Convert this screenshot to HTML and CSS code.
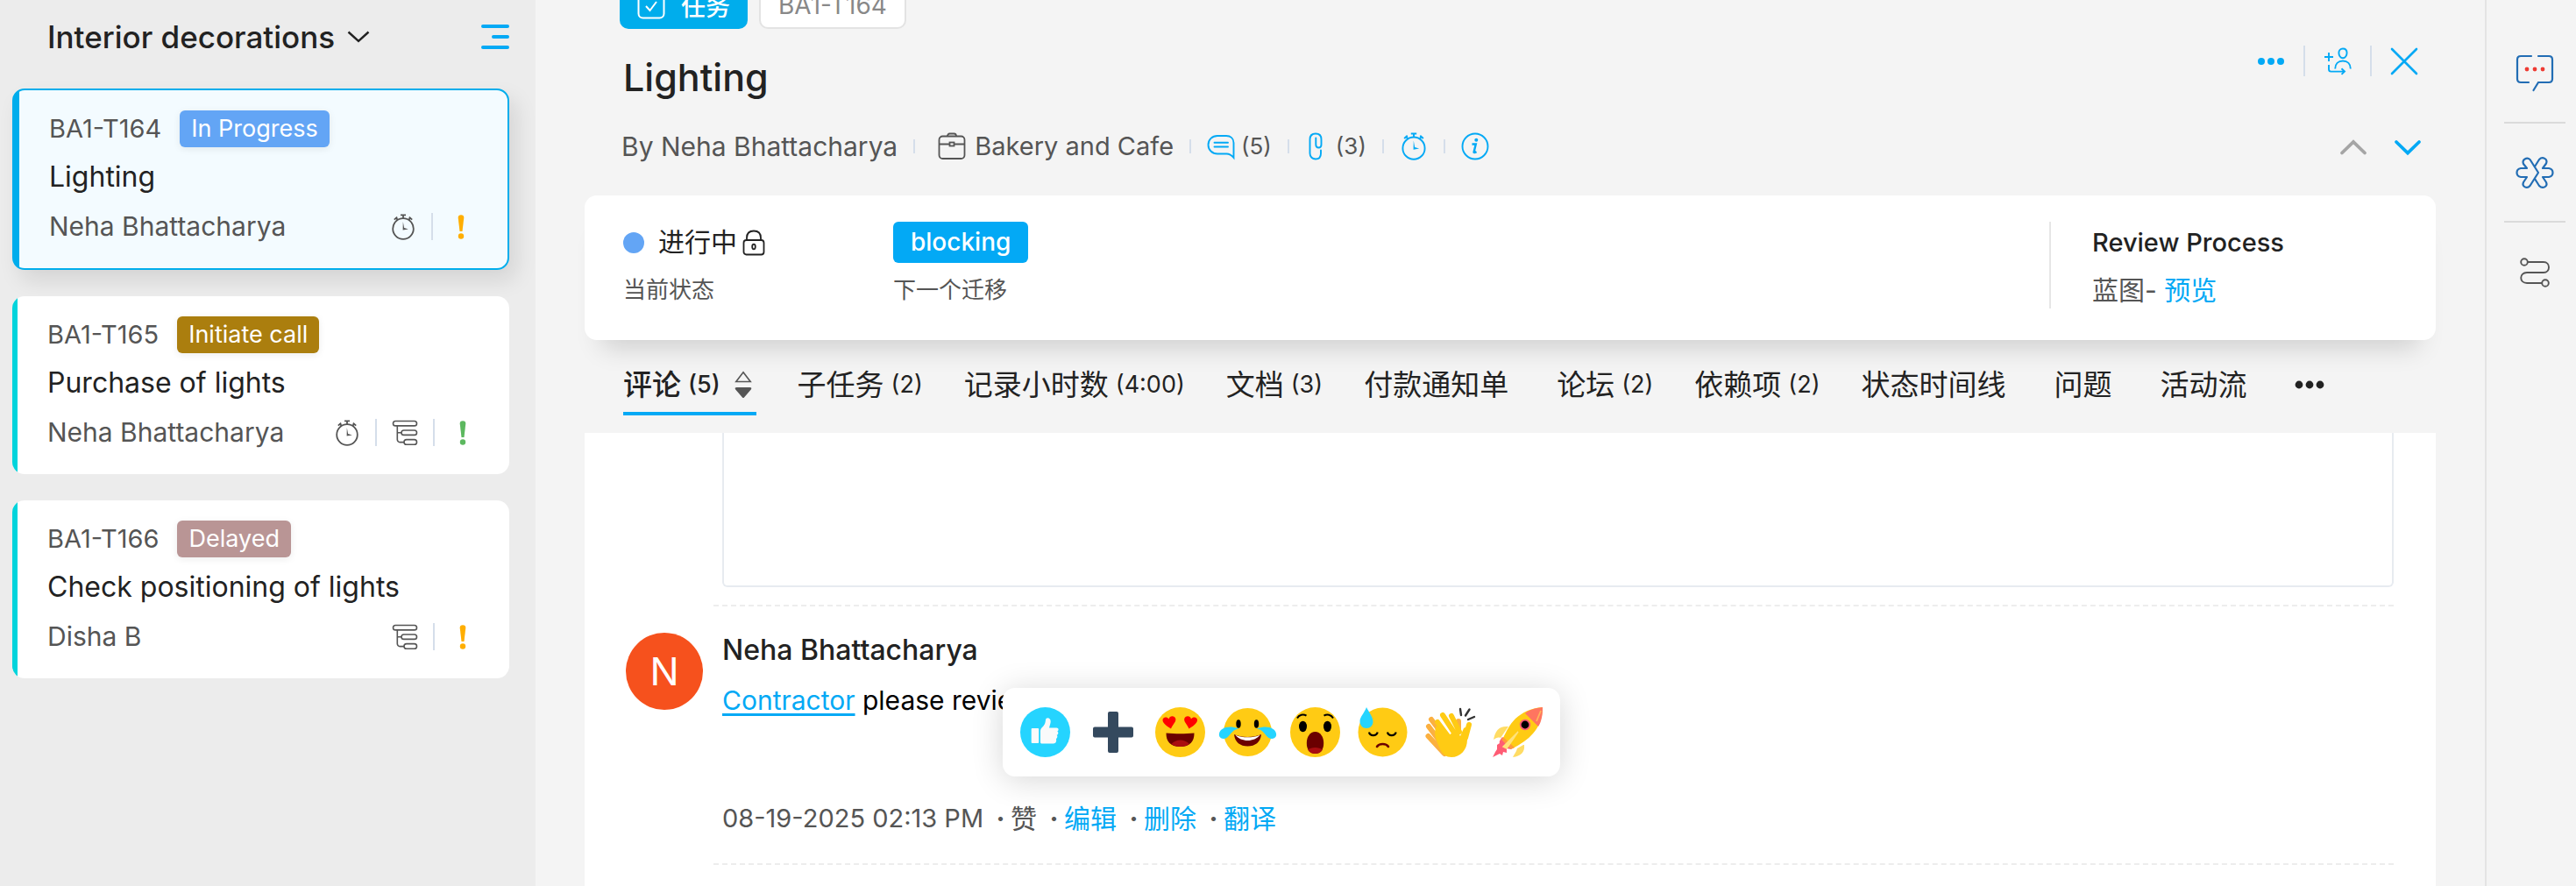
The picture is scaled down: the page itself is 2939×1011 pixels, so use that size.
FILE: index.html
```html
<!DOCTYPE html>
<html lang="zh-CN">
    <head>
        <meta charset="utf-8">
        <meta name="viewport" content="width=device-width, initial-scale=1">
        <title>Lighting</title>
        <link rel="stylesheet" href="styles.css">
    </head>
    <body>
        <!-- Shared icons -->
        <svg class="sprite" aria-hidden="true">
            <symbol id="timer" viewBox="0 0 30 30">
                <g fill="none" stroke="currentColor" stroke-width="1.8">
                    <circle cx="15" cy="17" r="11.8" />
                    <path d="M12 1.4h6M15 1.4v3.6M6.6 4.6l2.4 2.4M23.4 4.6L21 7" />
                    <path d="M4.8 6.6l3.4-3M25.2 6.6l-3.4-3" />
                </g>
                <path d="M14.8 9l1.3 7 4.7 1.4-6.2 1z" fill="currentColor" />
            </symbol>
            <symbol id="subtask" viewBox="0 0 30 30">
                <g fill="none" stroke="currentColor" stroke-width="1.6">
                    <rect x="1.5" y="1.5" width="27" height="5.4" rx="2.7" />
                    <rect x="11" y="12" width="17.5" height="5.4" rx="2.7" />
                    <rect x="14" y="22.6" width="14.5" height="5.6" rx="2.8" />
                    <path d="M6.3 7v15.600a3 3 0 0 0 3 3H14M6.300 14.700H11" />
                </g>
            </symbol>
            <symbol id="priority" viewBox="0 0 10 30">
                <path d="M5 1.200c2.200 0 3.500 1.200 3.300 3.300L6.500 20h-3L1.700 4.500C1.500 2.400 2.800 1.200 5 1.200z" fill="currentColor" />
                <circle cx="5" cy="25.500" r="3.200" fill="currentColor" />
            </symbol>
        </svg>

        <div class="app">
            <aside class="sidebar">
                <div class="sidebar-head">
                    <button class="list-title">
                        Interior decorations
                        <svg width="26" height="14" viewBox="0 0 26 14"><path d="M1.500 1.500L13 12 24.500 1.500" fill="none" stroke="currentColor" stroke-width="2.400" /></svg>
                    </button>
                    <button class="list-menu" aria-label="Collapse list">
                        <svg width="32" height="28" viewBox="0 0 32 28"><path d="M2 2h28M14 14h16M2 26h28" stroke="currentColor" stroke-width="4" stroke-linecap="round" /></svg>
                    </button>
                </div>

                <div class="card active">
                    <div class="card-row"><span>BA1-T164</span><span class="badge progress">In Progress</span></div>
                    <div class="card-name">Lighting</div>
                    <div class="card-row">
                        <span class="owner">Neha Bhattacharya</span>
                        <div class="card-icons">
                            <svg width="30" height="30"><use href="#timer" /></svg>
                            <i class="sep"></i>
                            <svg class="prio medium" width="10" height="30"><use href="#priority" /></svg>
                        </div>
                    </div>
                </div>

                <div class="card">
                    <div class="card-row"><span>BA1-T165</span><span class="badge initiate">Initiate call</span></div>
                    <div class="card-name">Purchase of lights</div>
                    <div class="card-row">
                        <span class="owner">Neha Bhattacharya</span>
                        <div class="card-icons">
                            <svg width="30" height="30"><use href="#timer" /></svg>
                            <i class="sep"></i>
                            <svg width="30" height="30"><use href="#subtask" /></svg>
                            <i class="sep"></i>
                            <svg class="prio low" width="10" height="30"><use href="#priority" /></svg>
                        </div>
                    </div>
                </div>

                <div class="card">
                    <div class="card-row"><span>BA1-T166</span><span class="badge delayed">Delayed</span></div>
                    <div class="card-name">Check positioning of lights</div>
                    <div class="card-row">
                        <span class="owner">Disha B</span>
                        <div class="card-icons">
                            <svg width="30" height="30"><use href="#subtask" /></svg>
                            <i class="sep"></i>
                            <svg class="prio medium" width="10" height="30"><use href="#priority" /></svg>
                        </div>
                    </div>
                </div>
            </aside>

            <main class="main">
                <header class="task-head">
                    <div class="task-info">
                        <div class="tags">
                            <span class="tag tag-type">
                                <svg width="32" height="32" viewBox="0 0 32 32"><g fill="none" stroke="currentColor" stroke-width="2"><rect x="1.500" y="1.500" width="29" height="29" rx="5" /><path d="M10 17l4.500 5L22 12" /></g></svg>
                                任务
                            </span>
                            <span class="tag tag-id">BA1-T164</span>
                        </div>
                        <h1>Lighting</h1>
                        <div class="meta">
                            <span>By Neha Bhattacharya</span>
                            <i class="sep short"></i>
                            <span class="project">
                                <svg width="32" height="32" viewBox="0 0 32 32"><g fill="none" stroke="currentColor" stroke-width="1.800"><rect x="1.500" y="4.500" width="29" height="25.500" rx="4" /><path d="M11 4.500c0-2 1-3 2.500-3h5c1.500 0 2.500 1 2.500 3M1.500 13.500H13M19 13.500h11.500" /><rect x="13.500" y="11.500" width="5" height="4" /></g></svg>
                                Bakery and Cafe
                            </span>
                            <i class="sep short"></i>
                            <button class="count-btn">
                                <svg width="32" height="32" viewBox="0 0 32 32"><g fill="none" stroke="currentColor" stroke-width="1.900"><path d="M12 4h10c5 0 8.500 3 8.500 8v17c-2.500-3-4.500-4.500-8-4.500H12C6 24.500 1.500 20 1.500 14.200S6 4 12 4z" /><path d="M8.500 11.800H24M8.500 16.500H24" stroke-linecap="round" /></g></svg>
                                (5)
                            </button>
                            <i class="sep short"></i>
                            <button class="count-btn clip">
                                <svg width="16" height="32" viewBox="0 0 16 32"><path d="M14 20.500V24c0 4-2.300 6.500-6 6.500S1.500 28 1.500 24V8C1.500 4 4 1.500 8 1.500S14.500 4 14.500 8v6c0 2.500-1 3.500-3 3.500s-3.200-1-3.200-3.500V6.500" fill="none" stroke="currentColor" stroke-width="1.900" stroke-linecap="round" /></svg>
                                (3)
                            </button>
                            <i class="sep short"></i>
                            <button class="icon-btn" aria-label="Timer"><svg width="32" height="32"><use href="#timer" /></svg></button>
                            <i class="sep short"></i>
                            <button class="icon-btn" aria-label="Info">
                                <svg width="32" height="32" viewBox="0 0 32 32"><circle cx="16" cy="16" r="14.500" fill="none" stroke="currentColor" stroke-width="1.900" /><circle cx="17.300" cy="8.800" r="2" fill="currentColor" /><path d="M12.500 13.500h4.300l-2.200 9c-.2 1 .8.800 2.900-.4" fill="none" stroke="currentColor" stroke-width="2.400" /></svg>
                            </button>
                        </div>
                    </div>
                    <div class="task-tools">
                        <div class="actions">
                            <button class="icon-btn" aria-label="More"><svg width="32" height="32" viewBox="0 0 32 32"><g fill="currentColor"><circle cx="5" cy="16" r="4" /><circle cx="16" cy="16" r="4" /><circle cx="27" cy="16" r="4" /></g></svg></button>
                            <i class="sep tall"></i>
                            <button class="icon-btn" aria-label="Assign">
                                <svg width="32" height="32" viewBox="0 0 32 32"><g fill="none" stroke="currentColor" stroke-width="1.900"><path d="M1 11h10M6 6v10M6 20v5c0 1.800.8 2.600 2.500 2.600H24M20.500 24.300l3.500 3.300-3.500 3.300" /><path d="M22 1.500c2.800 0 4.600 2 4.600 4.800 0 3.200-2 6-4.600 6s-4.600-2.800-4.600-6c0-2.800 1.800-4.800 4.600-4.800zM13.200 24.500c0-5.500 3.500-9 8.800-9s8.800 3.500 8.800 9" /></g></svg>
                            </button>
                            <i class="sep tall"></i>
                            <button class="icon-btn" aria-label="Close"><svg width="32" height="32" viewBox="0 0 32 32"><path d="M2 2l28 28M30 2L2 30" stroke="currentColor" stroke-width="2.600" stroke-linecap="round" /></svg></button>
                        </div>
                        <div class="pager">
                            <button class="icon-btn prev" aria-label="Previous"><svg width="32" height="18" viewBox="0 0 32 18"><path d="M3 15.500L16 3l13 12.500" fill="none" stroke="currentColor" stroke-width="3.800" stroke-linecap="round" /></svg></button>
                            <button class="icon-btn" aria-label="Next"><svg width="32" height="18" viewBox="0 0 32 18"><path d="M3 3l13 12.500L29 3" fill="none" stroke="currentColor" stroke-width="3.800" stroke-linecap="round" /></svg></button>
                        </div>
                    </div>
                </header>

                <section class="status">
                    <div class="status-item">
                        <div class="status-value">
                            <i class="dot"></i>进行中
                            <svg width="26" height="30" viewBox="0 0 26 30"><g fill="none" stroke="currentColor" stroke-width="1.800"><rect x="1.500" y="12" width="23" height="16.500" rx="3" /><path d="M5 12V9.500C5 4.500 8 1.500 13 1.500s8 3 8 8V12" /><ellipse cx="13" cy="19.500" rx="1.800" ry="2.800" /></g></svg>
                        </div>
                        <div class="status-label">当前状态</div>
                    </div>
                    <div class="status-item">
                        <div><button class="transition">blocking</button></div>
                        <div class="status-label">下一个迁移</div>
                    </div>
                    <div class="process">
                        <div class="process-name">Review Process</div>
                        <div class="process-link">蓝图- <a href="#">预览</a></div>
                    </div>
                </section>

                <nav class="tabs">
                    <button class="tab selected"><span>评论</span><b>(5)</b>
                        <svg width="20" height="32" viewBox="0 0 20 32"><path d="M10 1.800L18.200 12.500H1.800z" fill="none" stroke="#555" stroke-width="1.600" /><path d="M2.500 19h15c2 0 2.300 1.200 1.300 2.500L11 30.500c-.6.700-1.400.700-2 0L1.200 21.500C.2 20.200.5 19 2.500 19z" fill="#555" /></svg>
                    </button>
                    <button class="tab"><span>子任务</span><b>(2)</b></button>
                    <button class="tab"><span>记录小时数</span><b>(4:00)</b></button>
                    <button class="tab"><span>文档</span><b>(3)</b></button>
                    <button class="tab"><span>付款通知单</span></button>
                    <button class="tab"><span>论坛</span><b>(2)</b></button>
                    <button class="tab"><span>依赖项</span><b>(2)</b></button>
                    <button class="tab"><span>状态时间线</span></button>
                    <button class="tab"><span>问题</span></button>
                    <button class="tab"><span>活动流</span></button>
                    <button class="tab" aria-label="More tabs"><svg width="34" height="10" viewBox="0 0 34 10"><circle cx="5" cy="5" r="4.400" /><circle cx="17" cy="5" r="4.400" /><circle cx="29" cy="5" r="4.400" /></svg></button>
                </nav>

                <section class="comments">
                    <div class="attachment"></div>
                    <article class="comment">
                        <div class="avatar">N</div>
                        <div class="comment-body">
                            <div class="author">Neha Bhattacharya</div>
                            <div class="comment-text">
                                <a href="#">Contractor</a> please review
                                <div class="reactions">
                                    <button aria-label="Like"><svg viewBox="0 0 57 57">
                                        <circle cx="28.500" cy="28.500" r="28.500" fill="#25d4ff" />
                                        <g fill="#fafafa"><rect x="12.700" y="24" width="8.500" height="17" rx="1" /><path d="M23 27c0-2 1-3 3-5 2.500-3 2.500-4 3-7.500.3-3.300 5.500-3 5.700 1.500.1 2-1 5-1.700 7.500h8.500c2.500 0 2.800 3.200.8 4 1.700 1.200 1.200 3.800-.6 4.300 1.200 1.300.8 3.600-.8 4.200.8 2.500-.2 5.500-3 5.500H25c-1.500 0-2-.6-2-2z" /></g>
                                    </svg></button>
                                    <button aria-label="Add"><svg viewBox="0 0 57 57">
                                        <path d="M25 5h8q2 0 2 2v15.500h15q2 0 2 2v8q0 2-2 2H35V50q0 2-2 2h-8q-2 0-2-2V34.500H8q-2 0-2-2v-8q0-2 2-2h15V7q0-2 2-2z" fill="#34495e" />
                                    </svg></button>
                                    <button aria-label="Love"><svg viewBox="0 0 57 57">
                                        <circle cx="28.500" cy="28.500" r="28.500" fill="#ffcb14" />
                                        <path d="M18 24.500c-4-2.500-9-5.500-9.500-9.500-.3-3.500 4.500-5 7-1.500 1-4.500 7-4 7.800-.3.700 3.500-3.800 7-5.300 11.300z" fill="red" />
                                        <path d="M38.500 24.500c4-2.500 9-5.500 9.500-9.500.3-3.500-4.500-5-7-1.500-1-4.500-7-4-7.800-.3-.7 3.500 3.800 7 5.300 11.300z" fill="red" />
                                        <path d="M12.500 29.500c10 1 22 1 32 0C44.500 39 40 45 28.500 45S12.500 39 12.500 29.500z" fill="#6b0000" />
                                        <path d="M18.500 42c5-6 15-6 20.500 0-5 4-15.500 4-20.500 0z" fill="#a90d10" />
                                    </svg></button>
                                    <button aria-label="Laugh"><svg viewBox="0 0 57 57">
                                        <circle cx="28.500" cy="28.500" r="27.500" fill="#ffcb14" />
                                        <ellipse cx="18" cy="19" rx="2.700" ry="4.800" /><ellipse cx="38.500" cy="19" rx="2.700" ry="4.800" />
                                        <path d="M13 31c9 4 21.500 4 31 0-1 9-7 13.500-15.500 13.500S14 40 13 31z" fill="#6b0000" />
                                        <path d="M14.500 31.700c8.500 3.500 19.500 3.500 28 0C36 40 21 40 14.500 31.700z" fill="#fff" />
                                        <path d="M18 24.500C6 20-3 24-4 30c-1 5 4 7.500 8.500 5C9 32 10 26 18 24.500zM39 24.500c12-4.500 21-.5 22 5.500 1 5-4 7.500-8.500 5C48 32 47 26 39 24.500z" fill="#25d4ff" />
                                    </svg></button>
                                    <button aria-label="Surprised"><svg viewBox="0 0 57 57">
                                        <circle cx="28.500" cy="28.500" r="28.500" fill="#ffcb14" />
                                        <ellipse cx="14.500" cy="22" rx="4.500" ry="6.200" /><ellipse cx="42.500" cy="22" rx="4.500" ry="6.200" />
                                        <path d="M8 12.500c2-4 7-5 10.500-2.800M49 12.500c-2-4-7-5-10.500-2.800" fill="none" stroke="#000" stroke-width="2" />
                                        <path d="M28.500 28c6 0 9.700 6 9.700 13 0 7.500-3.700 12-9.700 12s-9.700-4.500-9.700-12c0-7 3.700-13 9.700-13z" fill="#6b0000" />
                                        <path d="M20 48.500c4-3.500 13-3.500 17 0-3.500 6-13.500 6-17 0z" fill="#a90d10" />
                                    </svg></button>
                                    <button aria-label="Sad"><svg viewBox="0 0 57 57">
                                        <circle cx="28.500" cy="28.500" r="28" fill="#ffcb14" />
                                        <path d="M13 28.500c1 4.800 8.500 4.800 9.700 0M34 28.500c1 4.800 8.500 4.800 9.700 0" fill="none" stroke="#000" stroke-width="2.200" />
                                        <path d="M22 45c2.500-4 10.500-4 13 0" fill="none" stroke="#6b0000" stroke-width="2.600" stroke-linecap="round" />
                                        <path d="M10 0c3 6 7.500 11 7.500 16.500 0 4-3 7.500-7.500 7.500s-7.500-3.500-7.500-8C2.500 11 8 6 10 0z" fill="#25d4ff" />
                                    </svg></button>
                                    <button aria-label="Clap"><svg viewBox="0 0 57 57">
                                        <g fill="none" stroke="#fbb040" stroke-width="6" stroke-linecap="round"><path d="M3.500 33L22 53M4 22l15 20M7 14l15 20M38 16v12" /></g>
                                        <g fill="none" stroke="#ffcb14" stroke-width="6" stroke-linecap="round"><path d="M14 17l12 16M20 9l13 20M30 10l9 18M50 20l-4 15" /></g>
                                        <path d="M13 21l10 11 4 0 4-3 5-4 4 8 4-9c3-2 5-2 6 0-1 4-2 8-2 13 0 12-8 20-18 20-6 0-10-3-13-9C14 40 8 31 13 21z" fill="#ffcb14" />
                                        <path d="M40 2l1 7M50.500 2.500L46 9.500M49 14l7-3" stroke="#333" stroke-width="2.400" stroke-linecap="round" />
                                    </svg></button>
                                    <button aria-label="Rocket"><svg viewBox="0 0 57 57">
                                        <path d="M1 37c2-10 6-16 17-15L9 35c-3-1-5 0-8 2zM35 43l-7 4c-1 4-3 6-5 10 9-1 14-6 13-14z" fill="#ffdc64" />
                                        <path d="M11 34c-2 3-4 5-3 7l-3 2v5l-2 3-3 6 8-4 3 2 1-4 4 1v-5l5 1 2-3z" fill="#ff5c74" />
                                        <path d="M57 0C43 1 34 6 26 13 19 20 16 27 12 35l11 12c9-5 17-10 23-17C53 22 57 12 57 0z" fill="#ffcb14" />
                                        <path d="M57 0C48 1 42 3 37 7l15 15c4-6 5-14 5-22z" fill="#ff7560" />
                                        <path d="M12 34l13 12-4 2-11-11z" fill="#ff9a3c" />
                                        <path d="M12 45l17-17-13 19z" stroke="#ffe27a" stroke-width="1.500" fill="#ffe27a" />
                                        <path d="M55 4l-5 12" stroke="#ffb45c" stroke-width="1.800" />
                                        <circle cx="37" cy="20" r="5.300" stroke="#ff5c74" stroke-width="1.800" />
                                    </svg></button>
                                </div>
                            </div>
                            <div class="comment-foot">
                                <time>08-19-2025 02:13 PM</time>
                                <button>赞</button>
                                <a href="#">编辑</a>
                                <a href="#">删除</a>
                                <a href="#">翻译</a>
                            </div>
                        </div>
                    </article>
                    <article class="comment">
                        <div class="avatar-gap"></div>
                        <div class="comment-body"></div>
                    </article>
                </section>
            </main>

            <nav class="rail">
                <button aria-label="Chat"><svg width="44" height="44" viewBox="0 0 44 44"><g fill="none" stroke="#226db4" stroke-width="2.200" stroke-linecap="round"><path d="M18 2H6C3.500 2 2 3.500 2 6v22c0 2.500 1.500 4 4 4h9M26 2h12c2.500 0 4 1.500 4 4v22c0 2.500-1.500 4-4 4H26l-5.500 9" /></g><g fill="#ee3b33"><circle cx="13" cy="17" r="2.400" /><circle cx="22" cy="17" r="2.400" /><circle cx="31" cy="17" r="2.400" /></g></svg></button>
                <button aria-label="Apps"><svg width="44" height="36" viewBox="0 0 44 36"><g fill="none" stroke="#226db4" stroke-width="2.200" stroke-linejoin="round"><path d="M13 13H6C0 14 0 22 6 23h7l-4 6c-2 5 4 8 7.500 4L26 18 16.500 3C13 0 7 3 9 8z" /><path d="M22 11l5-8c4-4 10-.5 8 4.500L31 13h7c6 1 6 9 0 10h-7l4 6c2 5-4 8-8 4l-5-8" /></g></svg></button>
                <button aria-label="Flow"><svg width="34" height="34" viewBox="0 0 34 34"><g fill="none" stroke="#555" stroke-width="1.900"><circle cx="5" cy="5" r="3.800" /><circle cx="29" cy="29" r="3.800" /><path d="M9 5h18c8 0 8 12 0 12H8C-1 17-1 29 8 29h17" /></g></svg></button>
            </nav>
        </div>
    </body>
</html>
```
FILE: styles.css
```css
* {
    box-sizing: border-box;
}

body {
    margin: 0;
    height: 100vh;
    overflow: hidden;
    background-color: #f4f4f4;
    color: #555;
    font-family: Inter, "Noto Sans CJK SC", sans-serif;
    font-size: 29px;
}

button {
    margin: 0;
    padding: 0;
    border: none;
    background: none;
    color: inherit;
    font: inherit;
    cursor: pointer;
}

svg {
    display: block;
    flex: none;
    overflow: visible;
}

a {
    color: #03a9f5;
    text-decoration: none;
}

.sprite {
    position: absolute;
    width: 0;
    height: 0;
}

.app {
    display: flex;
    height: 100%;
}

/* Sidebar */
.sidebar {
    flex: 0 0 611px;
    padding: 0 30px 0 14px;
    background-color: #ececec;
}

.sidebar-head {
    display: flex;
    justify-content: space-between;
    align-items: center;
    height: 83px;
    margin-bottom: 18px;
    padding-left: 40px;
}

.list-title {
    display: flex;
    align-items: center;
    gap: 14px;
    color: #222;
    font-size: 35px;
    font-weight: 500;
}

.list-menu {
    color: #03a9f5;
}

.card {
    display: grid;
    gap: 13px;
    margin-bottom: 30px;
    padding: 22px 48px 26px 40px;
    border-radius: 14px;
    background: linear-gradient(to right, #00d4dc 6px, #fff 6px);
    line-height: 43px;
}

.card.active {
    border: 2px solid #00adec;
    background: linear-gradient(to right, #00adec 6px, #f3fbff 6px);
    box-shadow: 8px 12px 24px rgba(0, 0, 0, 0.1);
}

.card-row {
    display: flex;
    align-items: center;
}

.card-name {
    color: #222;
    font-size: 32px;
    line-height: 41px;
    padding-bottom: 2px;
}

.owner {
    font-size: 30px;
}

.badge {
    margin-left: 21px;
    padding: 0 13px;
    border-radius: 6px;
    box-shadow: 0 2px 8px rgba(0, 0, 0, 0.08);
    color: #fff;
    font-size: 27px;
    line-height: 42px;
}

.progress {
    background-color: #63a5f5;
}

.initiate {
    background-color: #ab7e0e;
}

.delayed {
    background-color: #b99595;
}

.card-icons {
    display: flex;
    align-items: center;
    gap: 17px;
    margin-left: auto;
}

.prio {
    margin-left: 10px;
}

.medium {
    color: #ffae00;
}

.low {
    color: #5cb85f;
}

.sep {
    flex: none;
    width: 2px;
    height: 31px;
    background-color: #d5deea;
}

.sep.short {
    height: 16px;
}

.sep.tall {
    height: 35px;
}

/* Task detail */
.main {
    display: flex;
    flex: 1;
    flex-direction: column;
    min-width: 0;
    padding: 0 56px;
}

.task-head {
    display: flex;
    justify-content: space-between;
    padding: 0 16px 34px 40px;
}

.tags {
    display: flex;
    gap: 13px;
    margin-top: -21px;
    margin-bottom: 29px;
}

.tag {
    display: flex;
    align-items: center;
    height: 54px;
    padding: 0 20px;
    border-radius: 10px;
    font-size: 28px;
}

.tag-type {
    gap: 18px;
    background-color: #00adec;
    color: #fff;
    font-weight: 500;
}

.tag-id {
    border: 2px solid #e3e3e3;
    background-color: #fff;
    color: #888;
}

h1 {
    margin: 0 0 31px;
    padding-left: 4px;
    color: #222;
    font-size: 43px;
    font-weight: 500;
    line-height: 52px;
}

.meta {
    display: flex;
    align-items: center;
    gap: 18px;
    padding-left: 2px;
    font-size: 30px;
    line-height: 44px;
}

.project {
    display: flex;
    gap: 10px;
    align-items: center;
    padding-left: 8px;
    font-size: 29px;
}

.count-btn {
    display: flex;
    gap: 7px;
    align-items: center;
    font-size: 26px;
}

.count-btn svg,
.icon-btn {
    color: #03a9f5;
}

.clip {
    gap: 15px;
    padding-left: 4px;
}

.task-tools {
    display: flex;
    flex-direction: column;
    justify-content: space-between;
    align-items: flex-end;
    padding: 52px 0 12px;
}

.actions {
    display: flex;
    align-items: center;
    gap: 21px;
    padding-right: 4px;
}

.pager {
    display: flex;
    gap: 30px;
}

.prev {
    color: #a5a5a5;
}

.status {
    display: flex;
    padding: 30px 40px 36px 44px;
    border-radius: 14px;
    background-color: #fff;
    box-shadow: 0 28px 28px -20px rgba(0, 0, 0, 0.16);
}

.status-item {
    flex: 0 0 308px;
}

.status-value {
    display: flex;
    align-items: center;
    gap: 6px;
    color: #222;
    font-size: 30px;
    line-height: 47px;
}

.dot {
    width: 24px;
    height: 24px;
    margin-right: 10px;
    border-radius: 50%;
    background-color: #63a5f5;
}

.status-label {
    margin-top: 10px;
    font-size: 26px;
    line-height: 42px;
}

.transition {
    display: block;
    padding: 0 20px;
    border-radius: 6px;
    background-color: #03a9f5;
    color: #fff;
    font-size: 28px;
    font-weight: 500;
    line-height: 47px;
}

.process {
    flex: 0 0 401px;
    margin-left: auto;
    padding-left: 47px;
    border-left: 2px solid #e6e6e6;
}

.process-name {
    color: #222;
    font-weight: 500;
    line-height: 47px;
}

.process-link {
    margin-top: 10px;
    font-size: 30px;
    line-height: 42px;
}

/* Tabs */
.tabs {
    display: flex;
    gap: 47px;
    padding: 20px 44px;
}

.tab {
    display: flex;
    align-items: center;
    border-bottom: 4px solid transparent;
    color: #222;
    font-size: 33px;
    line-height: 62px;
    white-space: nowrap;
}

.tab span {
    margin-right: 8px;
}

.tab b {
    font-size: 27px;
    font-weight: 400;
}

.tab svg {
    fill: #222;
}

.tab.selected {
    padding-right: 5px;
    border-bottom-color: #03a9f5;
    font-weight: 500;
}

.tab.selected b {
    margin-right: 16px;
    font-weight: 500;
}

/* Comments */
.comments {
    flex: 1;
    padding: 0 48px 0 47px;
    background-color: #fff;
}

.attachment {
    height: 176px;
    margin: 0 0 20px 110px;
    border: 2px solid #e7ebf0;
    border-top: none;
    border-radius: 0 0 6px 6px;
}

.comment {
    display: flex;
    gap: 12px;
}

.avatar {
    flex: none;
    width: 88px;
    height: 88px;
    margin-top: 32px;
    border-radius: 50%;
    background-color: #f6511d;
    color: #fff;
    font-size: 44px;
    line-height: 88px;
    text-align: center;
}

.avatar-gap {
    flex: 0 0 88px;
}

.comment-body {
    flex: 1;
    padding: 29px 0 31px 10px;
    border-top: 2px dashed #ededed;
}

.author {
    color: #222;
    font-size: 32px;
    font-weight: 500;
    line-height: 42px;
}

.comment-text {
    position: relative;
    min-height: 136px;
    margin-top: 15px;
    color: #000;
    font-size: 30px;
    line-height: 42px;
}

.comment-text a {
    text-decoration: underline;
    text-decoration-thickness: 3px;
    text-underline-offset: 4px;
}

/* Reaction picker floats over the comment text */
.reactions {
    position: absolute;
    top: 7px;
    left: 320px;
    display: flex;
    gap: 20px;
    padding: 22px 20px;
    border-radius: 14px;
    background-color: #fff;
    box-shadow: 0 4px 36px rgba(0, 0, 0, 0.16);
}

.reactions svg {
    width: 57px;
    height: 57px;
}

.comment-foot {
    display: flex;
    align-items: center;
    font-size: 29px;
    line-height: 40px;
}

.comment-foot a,
.comment-foot button {
    font-size: 30px;
}

.comment-foot a::before,
.comment-foot button::before {
    content: "·";
    display: inline-block;
    width: 23px;
    padding-left: 8px;
    color: #555;
    font-weight: 700;
    text-align: center;
}

/* Right rail */
.rail {
    flex: 0 0 104px;
    padding: 28px 12px 0 20px;
    border-left: 2px solid #e3e3e3;
}

.rail button {
    display: flex;
    justify-content: center;
    align-items: center;
    width: 100%;
    height: 113px;
    border-bottom: 2px solid #dadada;
}

.rail button:last-child {
    border-bottom: none;
}
```
